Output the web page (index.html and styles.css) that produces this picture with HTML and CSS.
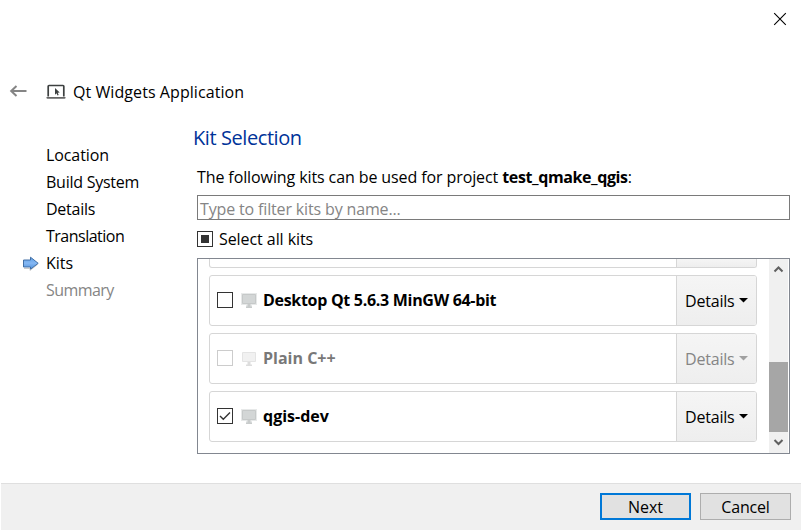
FILE: index.html
```html
<!DOCTYPE html>
<html lang="en">
<head>
<meta charset="utf-8">
<title>Qt Widgets Application</title>
<link rel="stylesheet" href="styles.css">
</head>
<body>
<div class="wizard">
  <div class="titlebar">
    <svg class="close" width="14" height="14" viewBox="0 0 14 14"><path d="M1.200 1.200L12.800 12.800M12.800 1.200L1.200 12.800" fill="none" stroke="#000" stroke-width="1.1"/></svg>
  </div>
  <header class="header">
    <svg class="back" width="18" height="12" viewBox="0 0 18 12"><path d="M17.500 6H2.500M7.500 1L2.200 6L7.500 11" fill="none" stroke="#858585" stroke-width="2"/></svg>
    <svg class="app-icon" width="20" height="16" viewBox="0 0 20 16"><path d="M2.200 12.500V2.200Q2.200 1.500 3 1.500H17Q17.800 1.500 17.800 2.200V12.500" fill="#fff" stroke="#3d4040" stroke-width="1.700"/><path d="M.5 13H19.500V14Q19.500 14.800 18.500 14.800H1.500Q.5 14.800 .5 14Z" fill="#666"/><path d="M9 4V10.700L10.500 9.300L11.500 11.500L12.700 11L11.700 8.800L13.700 8.600Z" fill="#3d4040"/></svg>
    <h1 class="app-title">Qt Widgets Application</h1>
  </header>
  <div class="body">
    <ol class="steps">
      <li><span class="t-location">Location</span></li>
      <li><span class="t-build">Build System</span></li>
      <li><span class="t-details">Details</span></li>
      <li><span class="t-translation">Translation</span></li>
      <li class="current"><svg width="17" height="15" viewBox="0 0 17 15"><defs><linearGradient id="arrow" x2="0" y2="1"><stop stop-color="#5d9ee6"/><stop offset=".5" stop-color="#86b8f3"/><stop offset="1" stop-color="#4e91df"/></linearGradient></defs><path d="M2 12.500H8V14.500L15.500 8.500" fill="none" stroke="#ccc"/><path d="M1.500 4H8.500V1.200L16.200 7.300L8.500 13.200V11H1.500Z" fill="url(#arrow)" stroke="#426fa5"/></svg><span class="t-kits">Kits</span></li>
      <li class="pending"><span class="t-summary">Summary</span></li>
    </ol>
    <main class="page">
      <h2 class="page-title">Kit Selection</h2>
      <p class="intro"><span class="t-intro">The following kits can be used for project</span> <b class="t-project">test_qmake_qgis</b>:</p>
      <div class="filter"><span class="t-filter">Type to filter kits by name...</span></div>
      <div class="select-all"><i class="check partial"></i><span class="t-select">Select all kits</span></div>
      <div class="kits">
        <div class="list">
          <div class="kit previous"><div class="kit-main"></div><div class="details"></div></div>
          <div class="kit">
            <div class="kit-main"><i class="check"></i><svg class="monitor" width="16" height="16" viewBox="0 0 16 16"><path d="M0 0H16V12H11V15H5V12H0Z" fill="#e7e9e9"/><path d="M1.500 1.500H14.500V10.500H1.500Z" fill="#d3d6d6" stroke="#c6c9c9"/><path d="M6.500 11H9.500V13.500H11V15H5V13.500H6.500Z" fill="#c8cbcb"/></svg><b class="t-desktop">Desktop Qt 5.6.3 MinGW 64-bit</b></div>
            <div class="details"><span>Details</span><i class="caret"></i></div>
          </div>
          <div class="kit disabled">
            <div class="kit-main"><i class="check"></i><svg class="monitor" width="16" height="16" viewBox="0 0 16 16"><path d="M1.500 1.500H14.500V10.500H1.500Z" fill="#f1f1f1" stroke="#e4e4e4"/><path d="M6.500 11H9.500V13.500H11V15H5V13.500H6.500Z" fill="#ddd"/></svg><b class="t-plain">Plain C++</b></div>
            <div class="details"><span>Details</span><i class="caret"></i></div>
          </div>
          <div class="kit">
            <div class="kit-main"><i class="check"><svg width="14" height="14" viewBox="0 0 14 14"><path d="M2 7L5.300 10.300L12 3.600" fill="none" stroke="#333" stroke-width="1.400"/></svg></i><svg class="monitor" width="16" height="16" viewBox="0 0 16 16"><path d="M0 0H16V12H11V15H5V12H0Z" fill="#e7e9e9"/><path d="M1.500 1.500H14.500V10.500H1.500Z" fill="#d3d6d6" stroke="#c6c9c9"/><path d="M6.500 11H9.500V13.500H11V15H5V13.500H6.500Z" fill="#c8cbcb"/></svg><b class="t-qgis">qgis-dev</b></div>
            <div class="details"><span>Details</span><i class="caret"></i></div>
          </div>
        </div>
        <div class="scrollbar">
          <svg width="19" height="20" viewBox="0 0 19 20"><path d="M5.500 12.500L9.500 8.500L13.500 12.500" fill="none" stroke="#606060" stroke-width="2"/></svg>
          <div class="track"><div class="thumb"></div></div>
          <svg width="19" height="21" viewBox="0 0 19 21"><path d="M5.500 8L9.500 12L13.500 8" fill="none" stroke="#606060" stroke-width="2"/></svg>
        </div>
      </div>
    </main>
  </div>
  <footer class="footer">
    <div class="button primary"><span class="t-next">Next</span></div>
    <div class="button"><span class="t-cancel">Cancel</span></div>
  </footer>
</div>
</body>
</html>
```
FILE: styles.css
```css
* { box-sizing: border-box; }
body {
  margin: 0;
  background: #fff;
  color: #000;
  font: 16px/27px "Open Sans", "Noto Sans", sans-serif;
  white-space: nowrap;
}
h1, h2, p, ol { margin: 0; padding: 0; font-weight: 400; }
svg { display: block; flex: none; }
.wizard {
  width: 802px;
  height: 531px;
  padding: 0 1px 1px;
  display: flex;
  flex-direction: column;
  overflow: hidden;
}
.titlebar { height: 78px; display: flex; justify-content: flex-end; padding: 12px 14px 0 0; flex: none; }
.header { height: 54px; padding-left: 8px; display: flex; align-items: flex-start; flex: none; }
.back { margin-top: 7px; }
.app-icon { margin: 6px 0 0 19px; }
.app-title { margin: 1px 0 0 7px; font-size: 16px; line-height: 27px; letter-spacing: .07px; }
.body { height: 351px; display: flex; flex: none; }
.steps { width: 192px; padding: 10px 0 0 21px; list-style: none; }
.steps li { height: 27px; display: flex; align-items: center; padding-left: 24px; }
.steps .current { padding-left: 0; gap: 7px; }
.pending { color: #858585; }
.page { width: 597px; }
.page-title { height: 32px; font-size: 20px; line-height: 12px; color: #003399; letter-spacing: -.42px; }
.intro { margin-left: 4px; height: 31px; }
.t-location { letter-spacing: -.1px; }
.t-build { letter-spacing: -.25px; }
.t-details { letter-spacing: -.25px; }
.t-translation { letter-spacing: -.5px; }
.t-translation { letter-spacing: -.5px; }
.t-summary { letter-spacing: -.57px; }
.t-intro { letter-spacing: -.1px; }
.t-project { letter-spacing: -.4px; }
.t-filter { letter-spacing: -.15px; }
.t-select { letter-spacing: -.07px; }
.t-desktop { letter-spacing: -.3px; }
.t-cancel { letter-spacing: -.2px; }
.filter {
  margin-left: 4px;
  width: 593px;
  height: 25px;
  border: 1px solid #7a7a7a;
  padding-left: 2px;
  line-height: 26px;
  color: #858585;
}
.select-all { display: flex; align-items: center; gap: 6px; margin-left: 4px; height: 38px; }
.check { display: block; width: 16px; height: 16px; border: 1px solid #333; flex: none; background: #fff; }
.partial { padding: 3px; background: #333 content-box; }
.kits {
  margin-left: 4px;
  width: 593px;
  height: 196px;
  border: 1px solid #828790;
  display: flex;
  justify-content: space-between;
  padding-right: 1px;
}
.list { width: 559px; padding-left: 11px; display: flex; flex-direction: column; gap: 7px; overflow: hidden; }
.kit { display: flex; width: 548px; height: 51px; flex: none; border: 1px solid #d6d6d6; border-radius: 3px; overflow: hidden; }
.kit.previous { height: 9px; border-top: 0; border-radius: 0 0 3px 3px; }
.kit-main { flex: 1; display: flex; align-items: center; padding-left: 7px; }
.kit-main .check { margin-top: -1px; }
.monitor { margin: 0 6px 0 8px; }
.details {
  width: 80px;
  border-left: 1px solid #d6d6d6;
  background: linear-gradient(#f5f5f5, #eee);
  display: flex;
  align-items: center;
  padding: 2px 0 0 8px;
  letter-spacing: -.2px;
}
.caret { width: 10px; height: 5px; margin: -3px 0 0 4px; background: #000; clip-path: polygon(0 0, 100% 0, 50% 100%); }
.disabled { color: #787878; }
.disabled .check { border-color: #ccc; }
.disabled .details { color: #858585; }
.disabled .caret { background: #a0a0a0; }
.scrollbar { width: 19px; background: #f0f0f0; }
.track { height: 153px; padding-top: 83px; }
.thumb { height: 70px; background: #a6a6a6; }
.footer {
  height: 47px;
  border-top: 1px solid #dfdfdf;
  background: #f0f0f0;
  display: flex;
  justify-content: flex-end;
  gap: 9px;
  padding: 9px 10px 0 0;
}
.button { width: 91px; height: 27px; border: 1px solid #adadad; background: #e1e1e1; text-align: center; line-height: 26px; }
.primary { border: 2px solid #0078d7; line-height: 24px; }
```
